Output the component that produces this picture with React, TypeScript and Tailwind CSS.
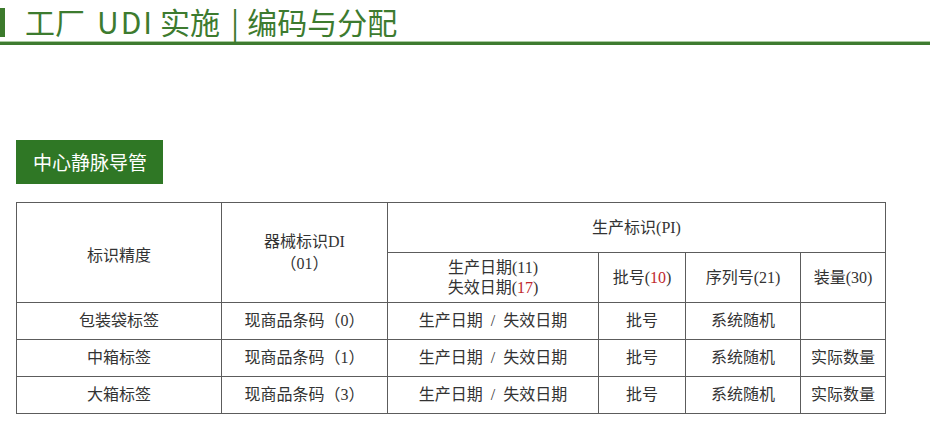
import React from "react";

const cjkSerif = '"Liberation Serif", "Noto Sans CJK SC", serif';
const cjkSans = '"Noto Sans CJK SC", "Noto Sans", sans-serif';

function Red({ children }: { children: React.ReactNode }) {
  return <span className="text-[#c0282d]">{children}</span>;
}

function Dates() {
  return (
    <span>
      生产日期<span className="mx-[8px]">/</span>失效日期
    </span>
  );
}

export default function App() {
  const cell = "border border-[#5c5c5c] text-center align-middle p-0";
  const rows = [
    { a: "包装袋标签", b: "现商品条码（0）", e: "" },
    { a: "中箱标签", b: "现商品条码（1）", e: "实际数量" },
    { a: "大箱标签", b: "现商品条码（3）", e: "实际数量" },
  ];
  return (
    <div className="w-[930px] h-[426px] bg-white overflow-hidden">
      <div className="flex items-start h-[41px]">
        <div className="mt-[8px] h-[29px] w-[5px] bg-[#3c7a2c]" />
        <div
          className="ml-[20px] flex text-[30px] leading-[42px] text-[#3d7b2f] whitespace-pre"
          style={{ fontFamily: cjkSans }}
        >
          <span>工厂</span>
          <span className="ml-[12px] tracking-[2px]">UDI</span>
          <span className="ml-[6px]">实施</span>
          <span className="ml-[11px]">|</span>
          <span className="ml-[8px]">编码与分配</span>
        </div>
      </div>
      <div className="h-[1px] bg-[#a9cba0]" />
      <div className="h-[3px] bg-[#3e7b30]" />

      <div
        className="mt-[95px] ml-[16px] w-[147px] h-[44px] bg-[#2f7725] text-white text-[19px] flex items-center pl-[17px]"
        style={{ fontFamily: cjkSans }}
      >
        中心静脉导管
      </div>

      <table
        className="mt-[18px] ml-[16px] w-[869px] border-collapse table-fixed text-[16px] text-[#333]"
        style={{ fontFamily: cjkSerif }}
      >
        <colgroup>
          <col className="w-[205px]" />
          <col className="w-[166px]" />
          <col className="w-[211px]" />
          <col className="w-[87px]" />
          <col className="w-[115px]" />
          <col className="w-[85px]" />
        </colgroup>
        <tbody>
          <tr className="h-[50px]">
            <td rowSpan={2} className={cell}>
              <span className="relative top-[3px]">标识精度</span>
            </td>
            <td rowSpan={2} className={`${cell} leading-[22px]`}>
              <div>器械标识DI</div>
              <div>（01）</div>
            </td>
            <td colSpan={4} className={cell}>
              生产标识(PI)
            </td>
          </tr>
          <tr className="h-[50px]">
            <td className={`${cell} leading-[20px]`}>
              <div>生产日期(11)</div>
              <div>
                失效日期(<Red>17</Red>)
              </div>
            </td>
            <td className={cell}>
              批号(<Red>10</Red>)
            </td>
            <td className={cell}>序列号(21)</td>
            <td className={cell}>装量(30)</td>
          </tr>
          {rows.map((r, i) => (
            <tr key={i} className="h-[37px]">
              <td className={cell}>{r.a}</td>
              <td className={cell}>{r.b}</td>
              <td className={cell}>
                <Dates />
              </td>
              <td className={cell}>批号</td>
              <td className={cell}>系统随机</td>
              <td className={cell}>{r.e}</td>
            </tr>
          ))}
        </tbody>
      </table>
    </div>
  );
}
